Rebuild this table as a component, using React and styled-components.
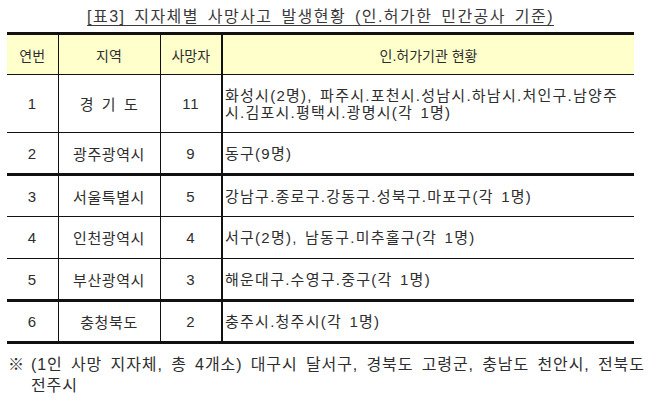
import React from 'react'
import styled, { createGlobalStyle } from 'styled-components'

const GlobalStyle = createGlobalStyle`
body {
    margin: 0;
    background: #ffffff;
    font-family: "Liberation Sans", "Noto Sans CJK KR", sans-serif;
    color: #2e2e2e;
}
`

const rows = [
    { no: '1', region: '경 기 도', deaths: '11', detail: ['화성시(2명), 파주시.포천시.성남시.하남시.처인구.남양주', '시.김포시.평택시.광명시(각 1명)'], tall: true },
    { no: '2', region: '광주광역시', deaths: '9', detail: ['동구(9명)'], thickBottom: true },
    { no: '3', region: '서울특별시', deaths: '5', detail: ['강남구.종로구.강동구.성북구.마포구(각 1명)'] },
    { no: '4', region: '인천광역시', deaths: '4', detail: ['서구(2명), 남동구.미추홀구(각 1명)'] },
    { no: '5', region: '부산광역시', deaths: '3', detail: ['해운대구.수영구.중구(각 1명)'], thickBottom: true },
    { no: '6', region: '충청북도', deaths: '2', detail: ['충주시.청주시(각 1명)'] },
]

function App() {
    return (
        <>
            <GlobalStyle />
            <StyledPage>
                <StyledTitle>
                    <span>[표3] 지자체별 사망사고 발생현황 (인.허가한 민간공사 기준)</span>
                </StyledTitle>
                <StyledTable>
                    <colgroup>
                        <col style={{ width: 51 }} />
                        <col style={{ width: 102 }} />
                        <col style={{ width: 62 }} />
                        <col />
                    </colgroup>
                    <thead>
                        <tr>
                            <HeadCell>연번</HeadCell>
                            <HeadCell>지역</HeadCell>
                            <HeadCell>사망자</HeadCell>
                            <HeadCell $last>인.허가기관 현황</HeadCell>
                        </tr>
                    </thead>
                    <tbody>
                        {rows.map(row => (
                            <StyledRow key={row.no} $tall={row.tall} $thickBottom={row.thickBottom}>
                                <Cell>{row.no}</Cell>
                                <Cell>{row.region}</Cell>
                                <Cell>{row.deaths}</Cell>
                                <DetailCell>
                                    {row.detail.map((line, i) => (
                                        <div key={i}>{line}</div>
                                    ))}
                                </DetailCell>
                            </StyledRow>
                        ))}
                    </tbody>
                </StyledTable>
                <StyledNote>
                    <span>※</span>
                    <p>(1인 사망 지자체, 총 4개소) 대구시 달서구, 경북도 고령군, 충남도 천안시, 전북도 전주시</p>
                </StyledNote>
            </StyledPage>
        </>
    )
}

const StyledPage = styled.div`
width: 651px;
height: 400px;
padding: 0 0 0 7px;
box-sizing: border-box;
overflow: hidden;
`

const StyledTitle = styled.div`
width: 627px;
height: 32px;
display: flex;
align-items: center;
justify-content: center;
font-size: 16px;
letter-spacing: 1.45px;
word-spacing: 3px;
color: #3a3a3a;
span {
    text-decoration: underline;
    text-underline-offset: 3px;
    margin-top: -2px;
}
`

const StyledTable = styled.table`
width: 627px;
border-collapse: collapse;
table-layout: fixed;
border-top: 3px solid #111;
border-bottom: 3px solid #111;
font-size: 15px;
`

const HeadCell = styled.th`
height: 39px;
padding: 0;
font-size: 14px;
font-weight: normal;
background: #ffffcc;
text-align: center;
border-bottom: 1px solid #111;
border-right: ${p => p.$last ? 'none' : '1px solid #111'};
&:nth-child(3) {
    border-right: 2px solid #111;
}
`

const StyledRow = styled.tr`
height: ${p => p.$tall ? '58px' : '42px'};
border-bottom: ${p => p.$thickBottom ? '3px solid #111' : '1px solid #111'};
`

const Cell = styled.td`
padding: 0;
text-align: center;
vertical-align: middle;
letter-spacing: 0.6px;
word-spacing: 3px;
border-right: 1px solid #111;
&:nth-child(3) {
    border-right: 2px solid #111;
}
`

const DetailCell = styled.td`
padding: 0 0 0 2px;
text-align: left;
line-height: 17px;
white-space: nowrap;
letter-spacing: 1.25px;
word-spacing: 2px;
`

const StyledNote = styled.div`
display: flex;
margin-top: 10px;
padding-left: 1px;
font-size: 16px;
line-height: 21px;
letter-spacing: 0.9px;
word-spacing: 3px;
span {
    flex: none;
    width: 23px;
}
p {
    flex: 1;
    margin: 0;
    word-break: keep-all;
}
`

export default App
